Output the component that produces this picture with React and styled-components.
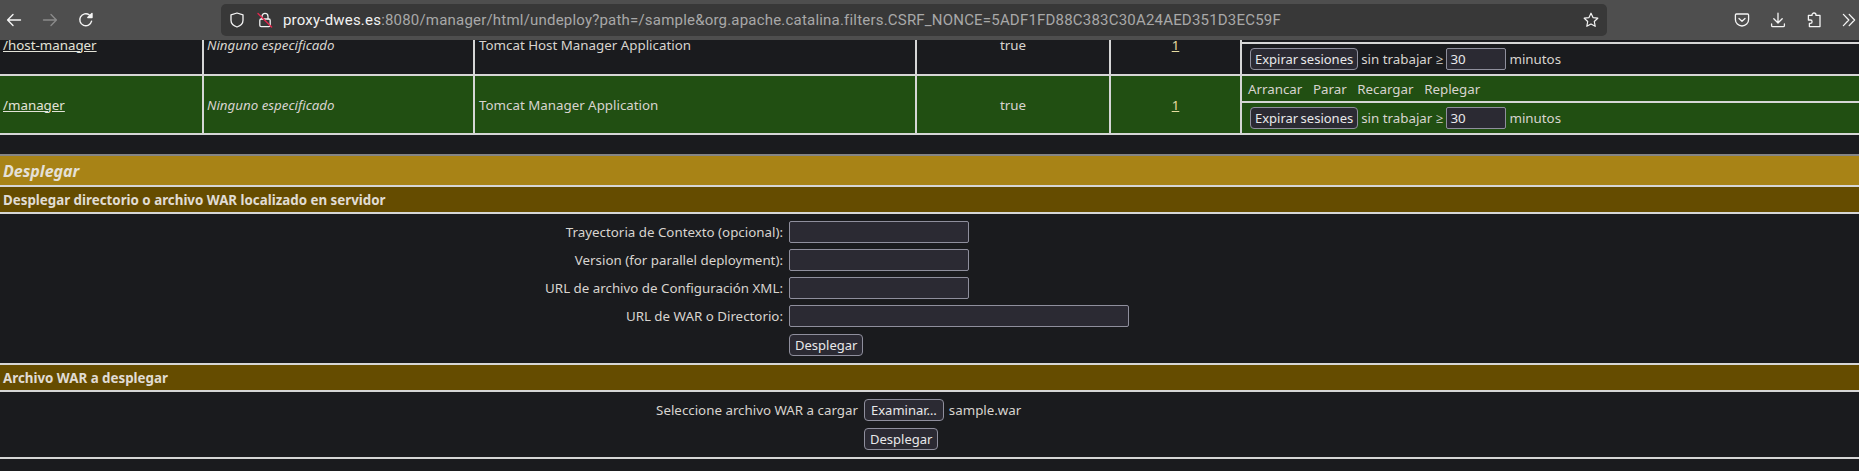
import React from "react";
import styled, { createGlobalStyle } from "styled-components";

const GlobalStyle = createGlobalStyle`
    html, body {
        margin:0;
        padding:0;
        height:100%;
        background:#1a1b1e;
    }
    body {
        font-family:"Noto Sans", "Open Sans", sans-serif;
        font-size:13.33px;
        color:#d8d4cf;
    }
`;

const Page = styled.div`
    height:471px;
    display:flex;
    flex-direction:column;
    overflow:hidden;
`;

const Toolbar = styled.header`
    height:40px;
    flex:none;
    display:flex;
    align-items:center;
    gap:8px;
    background:#4e4e4e;
    position:relative;
    z-index:1;
`;

const IconSlot = styled.span`
    width:28px;
    height:28px;
    flex:none;
    display:flex;
    align-items:center;
    justify-content:center;
    color:${props => props.$dim ? "#8a8a8a" : "#f4f4f4"};
`;

const OverflowSlot = styled(IconSlot)`
    width:20px;
    margin-left:3px;
`;

const UrlBar = styled.div`
    width:1386px;
    height:32px;
    margin-left:113px;
    margin-right:auto;
    flex:none;
    box-sizing:border-box;
    padding:0 2px;
    display:flex;
    align-items:center;
    background:#383838;
    border-radius:5px;
    font-family:Roboto, "Noto Sans", sans-serif;
    font-size:15px;
`;

const UrlText = styled.span`
    flex:1;
    margin-left:4px;
    color:#a8a8a8;
    white-space:nowrap;
    letter-spacing:0.2px;
`;

const UrlHost = styled.span`
    color:#f2f2f2;
`;

const Viewport = styled.main`
    flex:1;
    overflow:hidden;
`;

const Table = styled.div`
    margin-top:-25px;
`;

const Row = styled.div`
    display:grid;
    grid-template-columns:202px 269px 440px 192px 129px 1fr;
    column-gap:2px;
    height:${props => props.$height}px;
    padding-bottom:2px;
    background:#d6d6d6;
`;

const Cell = styled.div`
    display:flex;
    align-items:center;
    justify-content:${props => props.$center ? "center" : "flex-start"};
    padding-left:${props => props.$center ? 0 : 3}px;
    background:${props => props.$bg};
    font-style:${props => props.$italic ? "italic" : "normal"};
    white-space:nowrap;
`;

const NameCell = styled(Cell)`
    padding-left:4px;
`;

const TextLink = styled.a`
    color:#e3e3d8;
    text-decoration:underline;
`;

const CountLink = styled(TextLink)`
    color:#e6dca0;
`;

const Actions = styled.div`
    display:grid;
    grid-template-rows:${props => props.$top}px 1fr;
    row-gap:2px;
    background:#d6d6d6;
`;

const ActionRow = styled.div`
    display:flex;
    align-items:center;
    background:${props => props.$bg};
    padding-left:${props => props.$pad}px;
    white-space:nowrap;
`;

const ActionLabel = styled.span`
    margin-right:10.6px;
`;

const Button = styled.button`
    height:22px;
    box-sizing:border-box;
    padding:0 5px;
    background:#2b2a33;
    border:1px solid #8f8f9d;
    border-radius:4px;
    color:#e8e8ea;
    font-family:inherit;
    font-size:13px;
    line-height:1;
`;

const ExpireButton = styled(Button)`
    padding:0 4px;
    word-spacing:-1px;
`;

const FileButton = styled(Button)`
    padding:0 6px;
`;

const TextInput = styled.input`
    width:${props => props.$width}px;
    height:22px;
    box-sizing:border-box;
    padding:0 3px;
    background:#2b2a33;
    border:1px solid #8f8f9d;
    border-radius:2px;
    color:#e8e8ea;
    font:inherit;
`;

const Inline = styled.span`
    margin:0 3px;
`;

const Section = styled.section`
    margin-top:19px;
    border-top:2px solid #858585;
`;

const SectionTitle = styled.h2`
    margin:0;
    height:31px;
    box-sizing:border-box;
    padding-left:3px;
    display:flex;
    align-items:center;
    background:#a88316;
    border-bottom:2px solid #d6d6d6;
    font-size:16px;
    font-style:italic;
    font-weight:700;
    color:#e4e0d8;
`;

const SubTitle = styled.h3`
    margin:0;
    height:27px;
    box-sizing:border-box;
    padding-left:3px;
    display:flex;
    align-items:center;
    background:#654c00;
    border-bottom:2px solid #d6d6d6;
    font-size:13.33px;
    font-weight:700;
    color:#e0dcd4;
`;

const FormBody = styled.form`
    display:grid;
    grid-template-columns:${props => props.$label}px 1fr;
    column-gap:6px;
    row-gap:6px;
    align-items:center;
    padding:7px 0;
    border-bottom:2px solid #d6d6d6;
`;

const Label = styled.label`
    text-align:right;
    white-space:nowrap;
`;

const SubmitRow = styled.div`
    grid-column:2;
    margin-top:1px;
`;

const FileControl = styled.div`
    display:flex;
    align-items:center;
    gap:5px;
`;

const BackIcon = () => (
    <svg width="16" height="16" viewBox="0 0 16 16" fill="none" stroke="currentColor" strokeWidth="1.4" strokeLinecap="round" strokeLinejoin="round">
        <path d="M14.5 8H1.8M7 2.6 1.6 8 7 13.4" />
    </svg>
);

const ForwardIcon = () => (
    <svg width="16" height="16" viewBox="0 0 16 16" fill="none" stroke="currentColor" strokeWidth="1.4" strokeLinecap="round" strokeLinejoin="round">
        <path d="M1.5 8h12.7M9 2.6 14.4 8 9 13.4" />
    </svg>
);

const ReloadIcon = () => (
    <svg width="16" height="16" viewBox="0 0 16 16" fill="none" stroke="currentColor" strokeWidth="1.4" strokeLinecap="round" strokeLinejoin="round">
        <path d="M13.6 9.2A6 6 0 1 1 11.4 3" />
        <path d="M14 1.4v4.2H9.8Z" fill="currentColor" />
    </svg>
);

const ShieldIcon = () => (
    <svg width="16" height="16" viewBox="0 0 16 16" fill="none" stroke="currentColor" strokeWidth="1.3" strokeLinejoin="round">
        <path d="M8 1 2 2.8v5.4c0 3.2 2.6 5.6 6 6.8 3.4-1.2 6-3.6 6-6.8V2.8Z" />
    </svg>
);

const InsecureLockIcon = () => (
    <svg width="16" height="16" viewBox="0 0 16 16" fill="none" strokeLinecap="round">
        <path d="M5 7V4.4a3 3 0 0 1 6 0V7" stroke="#f0f0f0" strokeWidth="1.3" />
        <rect x="2.8" y="7" width="10.4" height="7.6" rx="1.4" stroke="#f0f0f0" strokeWidth="1.3" />
        <path d="M1 1.4 14.6 15" stroke="#e2264d" strokeWidth="1.4" />
    </svg>
);

const StarIcon = () => (
    <svg width="16" height="16" viewBox="0 0 16 16" fill="none" stroke="currentColor" strokeWidth="1.2" strokeLinejoin="round">
        <path d="M8 1.2 10 5.6l4.8.6-3.5 3.3.9 4.8L8 11.9l-4.2 2.4.9-4.8L1.2 6.2 6 5.6Z" />
    </svg>
);

const PocketIcon = () => (
    <svg width="16" height="16" viewBox="0 0 16 16" fill="none" stroke="currentColor" strokeWidth="1.3" strokeLinecap="round" strokeLinejoin="round">
        <path d="M2.4 2h11.2c.6 0 1 .4 1 1v4.4a6.6 6.6 0 0 1-13.2 0V3c0-.6.4-1 1-1Z" />
        <path d="M5 6.4 8 9.2l3-2.8" />
    </svg>
);

const DownloadIcon = () => (
    <svg width="16" height="16" viewBox="0 0 16 16" fill="none" stroke="currentColor" strokeWidth="1.3" strokeLinecap="round" strokeLinejoin="round">
        <path d="M8 1.2v9.6M3.8 6.8 8 11l4.2-4.2" />
        <path d="M1.6 12v1.4c0 .7.5 1.2 1.2 1.2h10.4c.7 0 1.2-.5 1.2-1.2V12" />
    </svg>
);

const PuzzleIcon = () => (
    <svg width="16" height="16" viewBox="0 0 16 16" fill="none" stroke="currentColor" strokeWidth="1.3" strokeLinejoin="round">
        <path d="M6 3.4V3a2 2 0 0 1 4 0v.4h4v11.2H3.4v-3.2h1a1.7 1.7 0 0 0 0-3.4h-2V3.4Z" />
    </svg>
);

const ChevronsIcon = () => (
    <svg width="14" height="14" viewBox="0 0 14 14" fill="none" stroke="currentColor" strokeWidth="1.3" strokeLinecap="round" strokeLinejoin="round">
        <path d="M1.4 1.4 6.8 7l-5.4 5.6M7.2 1.4 12.6 7l-5.4 5.6" />
    </svg>
);

const DARK = "#1a1b1e";
const GREEN = "#214f12";

const apps = [
    { path: "/host-manager", name: "Tomcat Host Manager Application", bg: DARK, height: 59, top: 27 },
    { path: "/manager", name: "Tomcat Manager Application", bg: GREEN, height: 57, top: 25 },
];

const contextFields = [
    { label: "Trayectoria de Contexto (opcional):", width: 180 },
    { label: "Version (for parallel deployment):", width: 180 },
    { label: "URL de archivo de Configuración XML:", width: 180 },
    { label: "URL de WAR o Directorio:", width: 340 },
];

const App = () => (
    <Page>
        <GlobalStyle />
        <Toolbar>
            <IconSlot><BackIcon /></IconSlot>
            <IconSlot $dim><ForwardIcon /></IconSlot>
            <IconSlot><ReloadIcon /></IconSlot>
            <UrlBar>
                <IconSlot><ShieldIcon /></IconSlot>
                <IconSlot><InsecureLockIcon /></IconSlot>
                <UrlText>
                    <UrlHost>proxy-dwes.es</UrlHost>:8080/manager/html/undeploy?path=/sample&amp;org.apache.catalina.filters.CSRF_NONCE=5ADF1FD88C383C30A24AED351D3EC59F
                </UrlText>
                <IconSlot><StarIcon /></IconSlot>
            </UrlBar>
            <IconSlot><PocketIcon /></IconSlot>
            <IconSlot><DownloadIcon /></IconSlot>
            <IconSlot><PuzzleIcon /></IconSlot>
            <OverflowSlot><ChevronsIcon /></OverflowSlot>
        </Toolbar>
        <Viewport>
            <Table>
                {apps.map(app => (
                    <Row key={app.path} $height={app.height}>
                        <Cell $bg={app.bg}><TextLink href="#">{app.path}</TextLink></Cell>
                        <Cell $bg={app.bg} $italic>Ninguno especificado</Cell>
                        <NameCell $bg={app.bg}>{app.name}</NameCell>
                        <Cell $bg={app.bg} $center>true</Cell>
                        <Cell $bg={app.bg} $center><CountLink href="#">1</CountLink></Cell>
                        <Actions $top={app.top}>
                            <ActionRow $bg={app.bg} $pad={6}>
                                <ActionLabel>Arrancar</ActionLabel>
                                <ActionLabel>Parar</ActionLabel>
                                <ActionLabel>Recargar</ActionLabel>
                                <ActionLabel>Replegar</ActionLabel>
                            </ActionRow>
                            <ActionRow $bg={app.bg} $pad={8}>
                                <ExpireButton type="button">Expirar sesiones</ExpireButton>
                                <Inline>sin trabajar ≥</Inline>
                                <TextInput $width={60} defaultValue="30" />
                                <Inline>minutos</Inline>
                            </ActionRow>
                        </Actions>
                    </Row>
                ))}
            </Table>
            <Section>
                <SectionTitle>Desplegar</SectionTitle>
                <SubTitle>Desplegar directorio o archivo WAR localizado en servidor</SubTitle>
                <FormBody $label={783}>
                    {contextFields.map(field => (
                        <React.Fragment key={field.label}>
                            <Label>{field.label}</Label>
                            <TextInput $width={field.width} />
                        </React.Fragment>
                    ))}
                    <SubmitRow><Button type="button">Desplegar</Button></SubmitRow>
                </FormBody>
                <SubTitle>Archivo WAR a desplegar</SubTitle>
                <FormBody $label={858}>
                    <Label>Seleccione archivo WAR a cargar</Label>
                    <FileControl>
                        <FileButton type="button">Examinar…</FileButton>
                        <span>sample.war</span>
                    </FileControl>
                    <SubmitRow><Button type="button">Desplegar</Button></SubmitRow>
                </FormBody>
            </Section>
        </Viewport>
    </Page>
);

export default App;
